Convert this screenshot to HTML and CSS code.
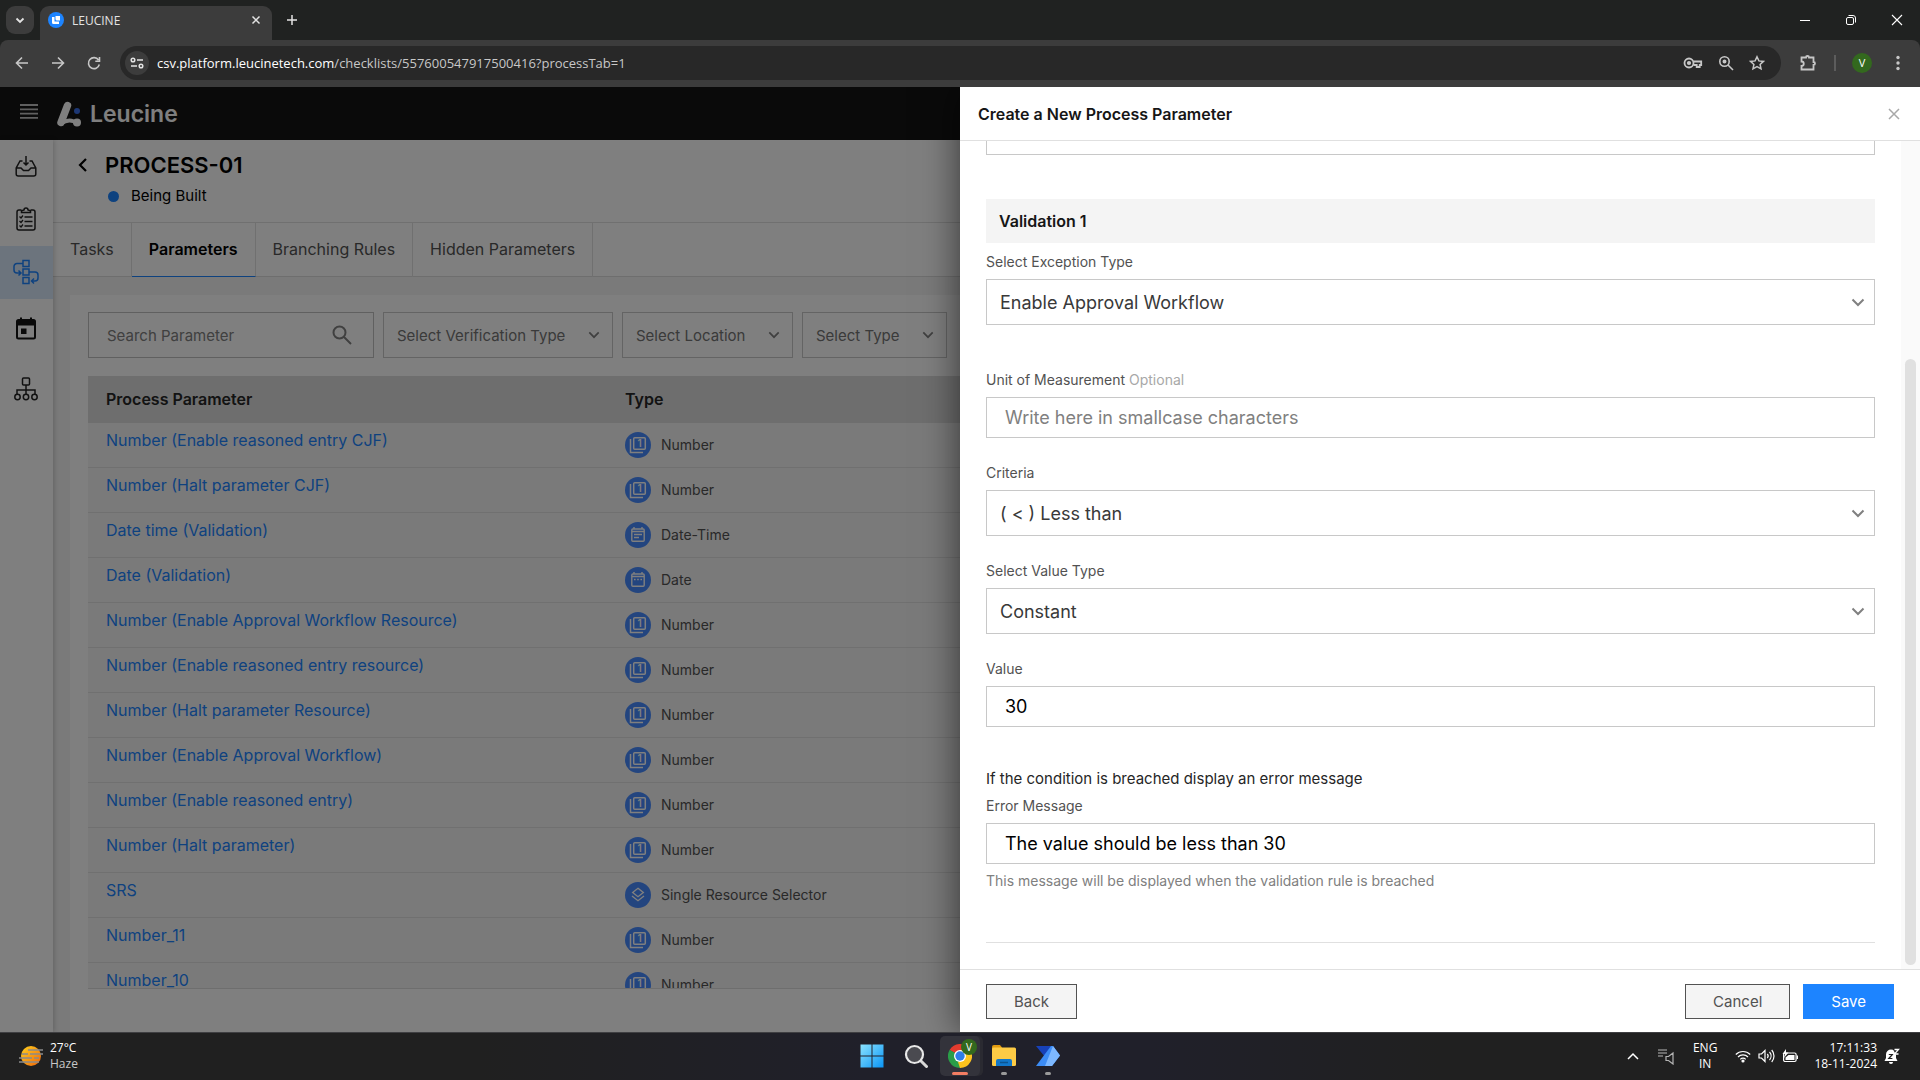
FILE: index.html
```html
<!DOCTYPE html>
<html lang="en">
<head>
    <meta charset="UTF-8">
    <title>LEUCINE</title>
    <link rel="stylesheet" href="styles.css">
</head>
<body>
    <!-- shared icons -->
    <svg class="sprite" aria-hidden="true">
        <symbol id="i-number" viewBox="0 0 26 26">
            <circle cx="13" cy="13" r="13" fill="#468aff"/>
            <path d="M5.500 7v13.500h12.500" fill="none" stroke="#fff" stroke-width="1.500"/>
            <rect x="8.700" y="5.700" width="11.600" height="11.600" rx="1" fill="none" stroke="#fff" stroke-width="1.500"/>
            <text x="14.500" y="15" text-anchor="middle" font-family="Inter, sans-serif" font-weight="600" font-size="10" fill="#fff">1</text>
        </symbol>
        <symbol id="i-datetime" viewBox="0 0 26 26">
            <circle cx="13" cy="13" r="13" fill="#468aff"/>
            <rect x="6.800" y="7" width="12.400" height="12.200" rx="1" fill="none" stroke="#fff" stroke-width="1.400"/>
            <path d="M9 5v2M17 5v2M7 9.500h12M9 12.500h8M9 15.500h5" stroke="#fff" stroke-width="1.400"/>
        </symbol>
        <symbol id="i-date" viewBox="0 0 26 26">
            <circle cx="13" cy="13" r="13" fill="#468aff"/>
            <rect x="6.800" y="7" width="12.400" height="12.200" rx="1" fill="none" stroke="#fff" stroke-width="1.400"/>
            <path d="M9 5v2M17 5v2M7 9.500h12" stroke="#fff" stroke-width="1.400"/>
            <path d="M9 12.500h1.600M12.200 12.500h1.600M15.400 12.500h1.600" stroke="#fff" stroke-width="1.600"/>
        </symbol>
        <symbol id="i-layers" viewBox="0 0 26 26">
            <circle cx="13" cy="13" r="13" fill="#468aff"/>
            <path d="M13 6.300l5.300 4.200-5.300 4.200-5.300-4.200zM7 14l6 4.700 6-4.700" fill="none" stroke="#fff" stroke-width="1.400"/>
        </symbol>
    </svg>

    <div class="screen">
        <!-- browser tabs -->
        <div class="tab-strip">
            <button class="tab-search" aria-label="Search tabs">
                <svg width="10" height="10" viewBox="0 0 10 10"><path d="M1.500 3.500L5 7l3.500-3.500" fill="none" stroke="#e3e3e3" stroke-width="1.800"/></svg>
            </button>
            <div class="tab">
                <svg width="16" height="16" viewBox="0 0 16 16"><circle cx="8" cy="8" r="8" fill="#1d84ff"/><path d="M4 5v5.500a1.500 1.500 0 0 0 1.500 1.500H11V9.500H6.500V5z" fill="#fff"/><path d="M7.500 4H12v4.500H9A1.500 1.500 0 0 1 7.500 7z" fill="#fff"/></svg>
                <span class="tab-title">LEUCINE</span>
                <button class="plain-btn" aria-label="Close tab">
                    <svg width="10" height="10" viewBox="0 0 10 10"><path d="M1.500 1.500l7 7M8.500 1.500l-7 7" stroke="#e3e3e3" stroke-width="1.500"/></svg>
                </button>
            </div>
            <button class="plain-btn new-tab" aria-label="New tab">
                <svg width="12" height="12" viewBox="0 0 12 12"><path d="M6 1v10M1 6h10" stroke="#e3e3e3" stroke-width="1.500"/></svg>
            </button>
            <div class="window-btns">
                <button class="plain-btn" aria-label="Minimize"><svg width="10" height="10" viewBox="0 0 10 10"><path d="M0 5.500h10" stroke="#fff"/></svg></button>
                <button class="plain-btn" aria-label="Restore"><svg width="10" height="10" viewBox="0 0 10 10" fill="none" stroke="#fff"><rect x=".5" y="2.500" width="7" height="7" rx="1.500"/><path d="M2.500.5H7A2.500 2.500 0 0 1 9.500 3v4.500"/></svg></button>
                <button class="plain-btn" aria-label="Close"><svg width="12" height="12" viewBox="0 0 12 12"><path d="M1 1l10 10M11 1L1 11" stroke="#fff" stroke-width="1.100"/></svg></button>
            </div>
        </div>

        <!-- address bar -->
        <div class="toolbar">
            <button class="plain-btn nav-btn" aria-label="Back"><svg width="16" height="16" viewBox="0 0 16 16" fill="none" stroke="#c7c7c7" stroke-width="1.600"><path d="M14 8H3M8 2.500L2.500 8 8 13.500"/></svg></button>
            <button class="plain-btn nav-btn" aria-label="Forward"><svg width="16" height="16" viewBox="0 0 16 16" fill="none" stroke="#c7c7c7" stroke-width="1.600"><path d="M2 8h11M8 2.500L13.500 8 8 13.500"/></svg></button>
            <button class="plain-btn nav-btn" aria-label="Reload"><svg width="16" height="16" viewBox="0 0 16 16" fill="none" stroke="#c7c7c7" stroke-width="1.600"><path d="M13.300 9.500A5.500 5.500 0 1 1 12.500 5M13.500 2v4.200H9.300"/></svg></button>
            <div class="omnibox">
                <span class="site-info">
                    <svg width="14" height="12" viewBox="0 0 14 12" fill="none" stroke="#e3e3e3" stroke-width="1.500"><circle cx="3" cy="3" r="1.800"/><path d="M7 3h6M1 9h6"/><circle cx="11" cy="9" r="1.800"/></svg>
                </span>
                <span class="url"><b>csv.platform.leucinetech.com</b>/checklists/557600547917500416?processTab=1</span>
                <svg width="20" height="16" viewBox="0 0 20 16" fill="none" stroke="#c7c7c7" stroke-width="1.800"><circle cx="6" cy="8" r="4.500"/><path d="M10.500 6.500h7.700v3.500h-1.500v2h-3v-2h-3.200"/><circle cx="6" cy="8" r="1.200" fill="#c7c7c7"/></svg>
                <svg width="16" height="16" viewBox="0 0 16 16" fill="none" stroke="#c7c7c7" stroke-width="1.600"><circle cx="6.500" cy="6.500" r="4.700"/><path d="M10 10l5 5"/><circle cx="6.500" cy="6.500" r="1.200" fill="#c7c7c7"/></svg>
                <svg width="16" height="16" viewBox="0 0 16 16" fill="none" stroke="#c7c7c7" stroke-width="1.500"><path d="M8 1.800l1.900 4.100 4.500.5-3.300 3 .9 4.400L8 11.600l-4 2.200.9-4.400-3.300-3 4.500-.5z"/></svg>
            </div>
            <svg class="puzzle" width="18" height="18" viewBox="0 0 18 18" fill="none" stroke="#c7c7c7" stroke-width="1.800"><path d="M2.500 3.500H7a1.500 1.500 0 0 1 3 0h4.500V8a1.500 1.500 0 0 1 0 3v4.500h-12V12a2 2 0 0 0 0-4.500z"/></svg>
            <span class="toolbar-sep"></span>
            <span class="avatar">V</span>
            <svg class="kebab" width="4" height="16" viewBox="0 0 4 16" fill="#c7c7c7"><circle cx="2" cy="2.500" r="1.700"/><circle cx="2" cy="8" r="1.700"/><circle cx="2" cy="13.500" r="1.700"/></svg>
        </div>

        <div class="app">
            <header class="app-header">
                <svg class="menu" width="18" height="15" viewBox="0 0 18 15"><path d="M0 1h18M0 5.300h18M0 9.600h18M0 13.900h18" stroke="#c0c0c0" stroke-width="1.800"/></svg>
                <svg class="logo" width="24" height="26" viewBox="0 0 24 26"><path d="M10.500 4.500L4 21.500" stroke="#fff" stroke-width="7.500" stroke-linecap="round"/><path d="M4 22.500q9-6 16 0" fill="none" stroke="#fff" stroke-width="4"/><circle cx="20" cy="21.500" r="4" fill="#fff"/><circle cx="20" cy="10" r="3" fill="#3a6fe8"/></svg>
                <span class="brand">Leucine</span>
            </header>

            <div class="app-body">
                <nav class="sidebar">
                    <a href="#" aria-label="Inbox"><svg width="22" height="22" viewBox="0 0 22 22" fill="none" stroke="#222" stroke-width="1.500"><path d="M7.500 6H5L1.200 13v6a2 2 0 0 0 2 2h15.600a2 2 0 0 0 2-2v-6L17 6h-2.500M1.200 13H6l2.500 2.500h5L16 13h4.800M11 1v9M8.500 7.500L11 10l2.500-2.500"/></svg></a>
                    <a href="#" aria-label="Checklists"><svg width="20" height="24" viewBox="0 0 20 24" fill="none" stroke="#222" stroke-width="1.500"><path d="M5.500 3H3a2 2 0 0 0-2 2v16a2 2 0 0 0 2 2h14a2 2 0 0 0 2-2V5a2 2 0 0 0-2-2h-2.500"/><path d="M5.500 5.500V3.800L8 3a2 2 0 0 1 4 0l2.500.8v1.700z"/><path d="M8.500 10h8M8.500 14.500h8M8.500 19h8M3.500 9.500L5 11l2-2.500M3.500 14L5 15.500 7 13M3.500 18.500L5 20l2-2.500" stroke-width="1.300"/></svg></a>
                    <a href="#" class="active" aria-label="Processes"><svg width="26" height="26" viewBox="0 0 26 26" fill="none" stroke="#1d84ff" stroke-width="1.500"><rect x="10" y="1.500" width="6" height="6"/><rect x="10" y="10" width="6" height="6"/><rect x="10" y="18.500" width="6" height="6"/><path d="M10 4.500H4a3 3 0 0 0-3 3V11a3 3 0 0 0 3 3h3.500M5.500 11.500L8 14l-2.500 2.500M16 13h6a3 3 0 0 1 3 3v3a3 3 0 0 1-3 3h-3.500M21 19.500L18.500 22l2.500 2.500"/></svg></a>
                    <a href="#" class="tall" aria-label="Schedule"><svg width="20" height="23" viewBox="0 0 20 23"><rect x="1" y="3" width="18" height="18.500" rx="1.500" fill="none" stroke="#141414" stroke-width="2"/><path d="M1 3h18v5.500H1zM4 .5h2V4H4zM14 .5h2V4h-2zM5 11.500h5.500V17H5z" fill="#141414"/></svg></a>
                    <a href="#" class="tall" aria-label="Ontology"><svg width="24" height="24" viewBox="0 0 24 24" fill="none" stroke="#222" stroke-width="1.500"><rect x="8.500" y="1" width="7" height="7" rx="1"/><path d="M12 8v9M3 17v-4h18v4"/><circle cx="3.500" cy="20" r="2.700"/><circle cx="12" cy="20" r="2.700"/><circle cx="20.500" cy="20" r="2.700"/></svg></a>
                </nav>

                <main class="main">
                    <div class="process-head">
                        <div class="process-name">
                            <a href="#" class="back-link" aria-label="Go back"><svg width="10" height="14" viewBox="0 0 10 14"><path d="M8 1L2 7l6 6" fill="none" stroke="#000" stroke-width="2.200"/></svg></a>
                            <h1>PROCESS-01</h1>
                        </div>
                        <div class="status">Being Built</div>
                    </div>
                    <div class="tabs">
                        <a href="#">Tasks</a>
                        <a href="#" class="active">Parameters</a>
                        <a href="#">Branching Rules</a>
                        <a href="#">Hidden Parameters</a>
                    </div>
                    <div class="content">
                        <div class="card">
                            <div class="filters">
                                <div class="search">
                                    <input type="text" placeholder="Search Parameter" aria-label="Search Parameter">
                                    <svg width="20" height="20" viewBox="0 0 20 20" fill="none" stroke="#808080" stroke-width="2"><circle cx="7.500" cy="7.500" r="6"/><path d="M12 12l7 7"/></svg>
                                </div>
                                <select aria-label="Verification type"><option>Select Verification Type</option></select>
                                <select aria-label="Location"><option>Select Location</option></select>
                                <select aria-label="Type"><option>Select Type</option></select>
                            </div>
                            <div class="table-box">
                                <table>
                                    <thead>
                                        <tr><th class="col-name">Process Parameter</th><th>Type</th></tr>
                                    </thead>
                                    <tbody>
                                        <tr><td><a href="#">Number (Enable reasoned entry CJF)</a></td><td><div class="type"><svg><use href="#i-number"/></svg>Number</div></td></tr>
                                        <tr><td><a href="#">Number (Halt parameter CJF)</a></td><td><div class="type"><svg><use href="#i-number"/></svg>Number</div></td></tr>
                                        <tr><td><a href="#">Date time (Validation)</a></td><td><div class="type"><svg><use href="#i-datetime"/></svg>Date-Time</div></td></tr>
                                        <tr><td><a href="#">Date (Validation)</a></td><td><div class="type"><svg><use href="#i-date"/></svg>Date</div></td></tr>
                                        <tr><td><a href="#">Number (Enable Approval Workflow Resource)</a></td><td><div class="type"><svg><use href="#i-number"/></svg>Number</div></td></tr>
                                        <tr><td><a href="#">Number (Enable reasoned entry resource)</a></td><td><div class="type"><svg><use href="#i-number"/></svg>Number</div></td></tr>
                                        <tr><td><a href="#">Number (Halt parameter Resource)</a></td><td><div class="type"><svg><use href="#i-number"/></svg>Number</div></td></tr>
                                        <tr><td><a href="#">Number (Enable Approval Workflow)</a></td><td><div class="type"><svg><use href="#i-number"/></svg>Number</div></td></tr>
                                        <tr><td><a href="#">Number (Enable reasoned entry)</a></td><td><div class="type"><svg><use href="#i-number"/></svg>Number</div></td></tr>
                                        <tr><td><a href="#">Number (Halt parameter)</a></td><td><div class="type"><svg><use href="#i-number"/></svg>Number</div></td></tr>
                                        <tr><td><a href="#">SRS</a></td><td><div class="type"><svg><use href="#i-layers"/></svg>Single Resource Selector</div></td></tr>
                                        <tr><td><a href="#">Number_11</a></td><td><div class="type"><svg><use href="#i-number"/></svg>Number</div></td></tr>
                                        <tr><td><a href="#">Number_10</a></td><td><div class="type"><svg><use href="#i-number"/></svg>Number</div></td></tr>
                                    </tbody>
                                </table>
                            </div>
                        </div>
                    </div>
                </main>
            </div>

            <div class="overlay"></div>

            <!-- parameter drawer -->
            <aside class="drawer">
                <div class="drawer-head">
                    <h2>Create a New Process Parameter</h2>
                    <button class="plain-btn" aria-label="Close drawer"><svg width="12" height="12" viewBox="0 0 12 12"><path d="M1 1l10 10M11 1L1 11" stroke="#a8a8a8" stroke-width="1.500"/></svg></button>
                </div>
                <div class="drawer-body">
                    <form class="form">
                        <div class="field-end"></div>
                        <h3>Validation 1</h3>
                        <div class="field first">
                            <label for="exception">Select Exception Type</label>
                            <select id="exception"><option>Enable Approval Workflow</option></select>
                        </div>
                        <div class="field">
                            <label for="unit">Unit of Measurement <span>Optional</span></label>
                            <input id="unit" type="text" placeholder="Write here in smallcase characters">
                        </div>
                        <div class="field">
                            <label for="criteria">Criteria</label>
                            <select id="criteria"><option>( &lt; ) Less than</option></select>
                        </div>
                        <div class="field">
                            <label for="value-type">Select Value Type</label>
                            <select id="value-type"><option>Constant</option></select>
                        </div>
                        <div class="field">
                            <label for="value">Value</label>
                            <input id="value" type="text" value="30">
                        </div>
                        <p class="condition">If the condition is breached display an error message</p>
                        <div class="field message">
                            <label for="error">Error Message</label>
                            <input id="error" type="text" value="The value should be less than 30">
                            <small>This message will be displayed when the validation rule is breached</small>
                        </div>
                    </form>
                    <div class="scroll-track"><div class="scroll-thumb"></div></div>
                </div>
                <div class="drawer-foot">
                    <button class="btn">Back</button>
                    <button class="btn push">Cancel</button>
                    <button class="btn primary">Save</button>
                </div>
            </aside>
        </div>

        <!-- taskbar -->
        <div class="taskbar">
            <div class="weather">
                <svg width="24" height="22" viewBox="0 0 24 22"><defs><linearGradient id="sun" x1="0" y1="0" x2="1" y2="1"><stop offset="0" stop-color="#ffd21e"/><stop offset="1" stop-color="#f0640a"/></linearGradient></defs><circle cx="12" cy="11" r="10" fill="url(#sun)"/><path d="M9 5h15M3 9h6M11 9h13M0 13h13M15 13h5M0 17h20" stroke="#8a8a8a" stroke-width="1.700"/></svg>
                <div>27°C<br><span>Haze</span></div>
            </div>
            <div class="apps">
                <button class="task" aria-label="Start"><svg width="24" height="24" viewBox="0 0 24 24"><defs><linearGradient id="win" x1="0" y1="0" x2="1" y2="1"><stop offset="0" stop-color="#8be3ff"/><stop offset="1" stop-color="#0a95f5"/></linearGradient></defs><path d="M.5.500h11v11H.5zM12.500.500h11v11h-11zM.5 12.500h11v11H.5zM12.500 12.500h11v11h-11z" fill="url(#win)"/></svg></button>
                <button class="task" aria-label="Search"><svg width="24" height="24" viewBox="0 0 24 24"><path d="M17 17l5.500 5.500" stroke="#d8d8d8" stroke-width="3" stroke-linecap="round"/><circle cx="10.500" cy="10.500" r="8.500" fill="#4a4a50" stroke="#e8e8e8" stroke-width="2.200"/></svg></button>
                <button class="task current" aria-label="Chrome">
                    <svg width="24" height="24" viewBox="0 0 24 24"><path d="M12 12L1.600 6A12 12 0 0 1 22.400 6z" fill="#e33b2e"/><path d="M12 12V24A12 12 0 0 1 1.600 6z" fill="#2a9d48"/><path d="M12 12L22.400 6A12 12 0 0 1 12 24z" fill="#fcc31e"/><path d="M12 6h10.400L17 15z" fill="#fcc31e"/><path d="M17 15l-5 9-2-6z" fill="#fcc31e"/><path d="M1.600 6L7 15l5-3z" fill="#2a9d48"/><circle cx="12" cy="12" r="6" fill="#fff"/><circle cx="12" cy="12" r="4.700" fill="#2f7de9"/></svg>
                    <span class="badge">V</span>
                    <i></i>
                </button>
                <button class="task open" aria-label="File Explorer"><svg width="24" height="24" viewBox="0 0 24 24"><path d="M0 3a2 2 0 0 1 2-2h6l2 2.500V8H0z" fill="#e09a10"/><rect y="3.500" width="24" height="18.500" rx="1.500" fill="#fdcb45"/><path d="M4 22v-5a2 2 0 0 1 2-2h12a2 2 0 0 1 2 2v5z" fill="#1277c9"/><path d="M8 18.500h8" stroke="#0b5490" stroke-width="1.500"/></svg><i></i></button>
                <button class="task open" aria-label="Power Automate"><svg width="24" height="24" viewBox="0 0 24 24"><path d="M0 2h15l4 5L9 13z" fill="#1741b8"/><path d="M15 2h2l7 9.500L16 22H0z" fill="#3c8cf5"/><path d="M17 2l7 9.500L16 22H9z" fill="#7db8ff"/></svg><i></i></button>
            </div>
            <div class="tray">
                <svg width="12" height="8" viewBox="0 0 12 8"><path d="M1 7l5-5 5 5" fill="none" stroke="#fff" stroke-width="1.500"/></svg>
                <svg class="mixer" width="18" height="18" viewBox="0 0 18 18" fill="none" stroke="#b5b5b5" stroke-width="1.200"><path d="M1 3h9M1 6h9M1 9h5M9 9.500h2.500L16 6v11l-4.500-3.500H9z"/></svg>
                <div class="lang">ENG<br>IN</div>
                <svg width="16" height="14" viewBox="0 0 16 14" fill="none" stroke="#fff" stroke-width="1.200"><path d="M.8 5.500a10.200 10.200 0 0 1 14.400 0M3 8a7 7 0 0 1 10 0M5.300 10.300a3.800 3.800 0 0 1 5.400 0"/><circle cx="8" cy="12" r="1" fill="#fff"/></svg>
                <svg width="17" height="14" viewBox="0 0 17 14" fill="none" stroke="#fff" stroke-width="1.200"><path d="M1 5h2.500L7 1.500v11L3.500 9H1zM9.300 5a3 3 0 0 1 0 4M11.500 3a6 6 0 0 1 0 8M13.700 1a9 9 0 0 1 0 12"/></svg>
                <svg width="17" height="14" viewBox="0 0 17 14"><rect x="1.600" y="4" width="12.500" height="8.500" rx="1.500" fill="none" stroke="#fff" stroke-width="1.200"/><path d="M6.500 6H12.500v5h-9V8.500zM14.800 6.500H16v3.500h-1.200z" fill="#fff"/><path d="M4 0L.5 5H3L2 9l4.500-5.500H4z" fill="#fff"/></svg>
                <div class="clock">17:11:33<br>18-11-2024</div>
                <!-- muted bell -->
                <svg width="16" height="16" viewBox="0 0 16 16"><path d="M7 1.500a5 5 0 0 0-5 5V10L.5 13h13L12 10V6.500a5 5 0 0 0-5-5z" fill="#fff"/><path d="M5 14h4a2 2 0 0 1-4 0z" fill="#fff"/><path d="M8.500 0H16v8h-3.500z" fill="#202020"/><path d="M4.800 6.500h3.600l-3.600 4h3.600" fill="none" stroke="#202020" stroke-width="1.200"/><path d="M10.500 1.500h4l-4 4.500h4" fill="none" stroke="#fff" stroke-width="1.300"/></svg>
            </div>
        </div>
    </div>
</body>
</html>
```
FILE: styles.css
```css
* {
    margin: 0;
    padding: 0;
    box-sizing: border-box;
}
body {
    font-family: Inter, "Liberation Sans", sans-serif;
    font-size: 15px;
    overflow: hidden;
}
a {
    text-decoration: none;
    color: inherit;
}
svg {
    display: block;
    flex-shrink: 0;
}
button,input,select {
    font-family: inherit;
}
.sprite {
    display: none;
}
.screen {
    display: flex;
    flex-direction: column;
    height: 100vh;
    background: #202221;
}
.plain-btn {
    display: flex;
    align-items: center;
    justify-content: center;
    border: 0;
    background: none;
    cursor: pointer;
}

/* browser */
.tab-strip {
    display: flex;
    align-items: center;
    height: 40px;
    padding-left: 6px;
    font-family: "Open Sans", "Noto Sans", sans-serif;
}
.tab-search {
    display: flex;
    align-items: center;
    justify-content: center;
    width: 28px;
    height: 28px;
    border: 0;
    border-radius: 9px;
    background: #3c3c3c;
}
.tab {
    display: flex;
    align-items: center;
    align-self: flex-end;
    gap: 8px;
    width: 232px;
    height: 34px;
    margin-left: 6px;
    padding: 0 11px 6px 8px;
    border-radius: 9px 9px 0 0;
    background: #3c3c3c;
}
.tab-title {
    flex: 1;
    font-size: 12px;
    color: #e3e3e3;
}
.new-tab {
    margin-left: 14px;
}
.window-btns {
    display: flex;
    margin-left: auto;
}
.window-btns .plain-btn {
    width: 46px;
    height: 40px;
}
.toolbar {
    display: flex;
    align-items: center;
    height: 47px;
    padding: 0 20px 1px 4px;
    border-radius: 8px 8px 0 0;
    background: #3c3c3c;
    font-family: "Open Sans", "Noto Sans", sans-serif;
}
.nav-btn {
    width: 36px;
    height: 34px;
}
.omnibox {
    display: flex;
    flex: 1;
    align-items: center;
    gap: 15px;
    height: 34px;
    margin-left: 8px;
    padding: 0 16px 0 5px;
    border-radius: 17px;
    background: #282828;
}
.site-info {
    display: flex;
    align-items: center;
    justify-content: center;
    width: 24px;
    height: 24px;
    border-radius: 50%;
    background: #3c3c3c;
}
.url {
    flex: 1;
    margin-left: -7px;
    font-size: 13px;
    color: #c7c7c7;
}
.url b {
    font-weight: 400;
    color: #fff;
}
.puzzle {
    margin-left: 18px;
}
.toolbar-sep {
    width: 2px;
    height: 16px;
    margin: 0 16px 0 17px;
    background: #5c5c5c;
}
.avatar {
    width: 20px;
    height: 20px;
    margin-right: 24px;
    border-radius: 50%;
    font-size: 11px;
    line-height: 20px;
    text-align: center;
    color: #fff;
    background: #33691e;
}

/* app */
.app {
    position: relative;
    display: flex;
    flex: 1;
    flex-direction: column;
    min-height: 0;
    overflow: hidden;
    background: #fff;
}
.app-header {
    display: flex;
    align-items: center;
    height: 53px;
    padding-left: 20px;
    background: #141414;
}
.menu {
    margin-bottom: 4px;
}
.logo {
    margin-left: 19px;
}
.brand {
    margin-left: 9px;
    font-size: 23px;
    font-weight: 600;
    color: #fff;
}
.app-body {
    display: flex;
    flex: 1;
    min-height: 0;
}
.sidebar {
    z-index: 1;
    width: 53px;
    box-shadow: 1px 0 5px rgba(0, 0, 0, .2);
}
.sidebar a {
    display: flex;
    align-items: center;
    justify-content: center;
    height: 53px;
    padding: 0 2px 1px 0;
}
.sidebar a.active {
    background: #d9e8fb;
}
.sidebar a.tall {
    height: 60px;
}
.main {
    display: flex;
    flex: 1;
    flex-direction: column;
    min-width: 0;
}
.process-head {
    height: 83px;
    padding: 11px 25px 0;
    border-bottom: 1px solid #e0e0e0;
}
.process-name {
    display: flex;
    align-items: center;
    gap: 17px;
}
h1 {
    font-size: 22px;
    line-height: 28px;
    font-weight: 600;
}
.status {
    display: flex;
    align-items: center;
    gap: 12px;
    padding: 6px 0 0 30px;
    line-height: 22px;
}
.status::before {
    content: "";
    width: 11px;
    height: 11px;
    border-radius: 50%;
    background: #1d84ff;
}
.tabs {
    display: flex;
    height: 54px;
    border-bottom: 1px solid #dcdcdc;
}
.tabs a {
    height: 54px;
    padding: 0 17px;
    border-right: 1px solid #e0e0e0;
    font-size: 16px;
    line-height: 53px;
    color: #525252;
}
.tabs a.active {
    border-bottom: 1px solid #1d84ff;
    font-weight: 600;
    color: #000;
}
.content {
    display: flex;
    flex: 1;
    min-height: 0;
    padding: 18px 17px 0;
    background: #f4f4f4;
}
.card {
    display: flex;
    flex: 1;
    flex-direction: column;
    min-width: 0;
    padding: 17px 18px 43px;
    background: #fff;
}
.filters {
    display: flex;
    gap: 9px;
    margin-bottom: 18px;
}
.search {
    display: flex;
    align-items: center;
    width: 286px;
    height: 46px;
    padding: 0 21px 0 18px;
    border: 1px solid #c0c0c0;
}
.search input {
    flex: 1;
    min-width: 0;
    border: 0;
    outline: 0;
    font-size: 15px;
    background: none;
}
input::placeholder {
    color: #808080;
}
select {
    appearance: none;
    border: 1px solid #c8c8c8;
    border-radius: 0;
    background: #fff url("data:image/svg+xml,%3Csvg xmlns='http://www.w3.org/2000/svg' width='14' height='9' viewBox='0 0 14 9'%3E%3Cpath d='M1.500 1.500L7 7l5.500-5.500' fill='none' stroke='%23808080' stroke-width='2'/%3E%3C/svg%3E") no-repeat right 9px center;
}
.filters select {
    height: 46px;
    padding: 0 46px 0 13px;
    font-size: 15px;
    color: #757575;
    background-size: 12px;
    background-position: right 12px center;
}
.table-box {
    flex: 1;
    min-height: 0;
    overflow: hidden;
    border-bottom: 1px solid #dcdcdc;
}
table {
    width: 100%;
    border-spacing: 0;
    table-layout: fixed;
    background: #f4f4f4;
}
th {
    height: 47px;
    padding: 0 18px 2px;
    text-align: left;
    font-size: 16px;
    font-weight: 600;
    color: #262626;
    background: #dcdcdc;
}
.col-name {
    width: 519px;
}
td {
    height: 45px;
    padding: 7px 18px 0;
    border-bottom: 1px solid #e0e0e0;
    line-height: 20px;
    vertical-align: top;
}
td a {
    font-size: 16px;
    color: #1d84ff;
}
.type {
    display: flex;
    align-items: center;
    gap: 10px;
    padding-top: 2px;
    font-size: 14px;
    color: #525252;
}
.type svg {
    width: 26px;
    height: 26px;
}

/* drawer */
.overlay {
    position: absolute;
    inset: 0;
    z-index: 2;
    background: rgba(0, 0, 0, .5);
}
.drawer {
    position: absolute;
    top: 0;
    right: 0;
    bottom: 0;
    z-index: 3;
    display: flex;
    flex-direction: column;
    width: 50%;
    background: #fff;
    box-shadow: 0 0 36px rgba(0, 0, 0, .6);
}
.drawer-head {
    display: flex;
    align-items: center;
    justify-content: space-between;
    height: 54px;
    padding: 0 20px 0 18px;
    border-bottom: 1px solid #e0e0e0;
}
h2,h3 {
    font-size: 16px;
    font-weight: 600;
    color: #161616;
}
.drawer-body {
    display: flex;
    flex: 1;
    min-height: 0;
}
.form {
    flex: 1;
    padding: 0 26px;
}
.field-end {
    height: 14px;
    border: 1px solid #c8c8c8;
    border-top: 0;
}
h3 {
    height: 44px;
    margin: 44px 0 9px;
    padding-left: 13px;
    line-height: 44px;
    background: #f4f4f4;
}
.field {
    display: flex;
    flex-direction: column;
    gap: 7px;
    margin-bottom: 25px;
}
.field.first {
    margin-bottom: 46px;
}
.field label {
    font-size: 14px;
    line-height: 20px;
    color: #525252;
}
.field label span {
    color: #a8a8a8;
}
.field select {
    height: 46px;
    padding-left: 13px;
    font-size: 18px;
    color: #393939;
}
.field input {
    height: 41px;
    padding: 0 18px;
    border: 1px solid #c8c8c8;
    outline: 0;
    font-size: 18px;
    color: #000;
}
.field input::placeholder {
    color: #808080;
}
.condition {
    margin: 42px 0 7px;
    line-height: 20px;
    color: #262626;
}
.field.message {
    padding-bottom: 51px;
    border-bottom: 1px solid #e0e0e0;
}
.field.first {
    margin-bottom: 45px;
}
.field small {
    font-size: 14px;
    line-height: 20px;
    color: #808080;
}
.scroll-track {
    width: 19px;
    padding: 218px 4px 4px;
    background: #fafafa;
}
.scroll-thumb {
    height: 100%;
    border-radius: 6px;
    background: #e0e0e0;
}
.drawer-foot {
    display: flex;
    align-items: center;
    gap: 13px;
    height: 63px;
    padding: 0 26px;
    border-top: 1px solid #e0e0e0;
}
.btn {
    height: 35px;
    padding: 0 27px;
    border: 1px solid #525252;
    font-size: 15px;
    color: #525252;
    background: #f4f4f4;
    cursor: pointer;
}
.btn.push {
    margin-left: auto;
}
.btn.primary {
    border-color: #1d84ff;
    color: #fff;
    background: #1d84ff;
}

/* taskbar */
.taskbar {
    display: grid;
    grid-template-columns: 1fr auto 1fr;
    align-items: center;
    height: 48px;
    padding-bottom: 1px;
    border-top: 1px solid #3f3f42;
    font-family: "Open Sans", "Noto Sans", sans-serif;
    font-size: 12px;
    line-height: 16px;
    color: #fff;
    background: linear-gradient(90deg, #202020 25%, #20202a 45%, #20202a 60%, #202020 75%);
}
.weather {
    display: flex;
    align-items: center;
    gap: 7px;
    padding-left: 19px;
}
.weather span {
    color: #c8c8c8;
}
.apps {
    display: flex;
    gap: 4px;
}
.task {
    position: relative;
    display: flex;
    align-items: center;
    justify-content: center;
    width: 40px;
    height: 40px;
    border: 0;
    border-radius: 5px;
    background: none;
}
.task.current {
    background: #33333b;
    box-shadow: 3px 0 0 #2a2a31;
}
.task i {
    position: absolute;
    bottom: 1px;
    left: 50%;
    width: 6px;
    height: 3px;
    margin-left: -3px;
    border-radius: 2px;
    background: #9a9a9a;
}
.task.current i {
    width: 16px;
    margin-left: -8px;
    background: #f27d63;
}
.badge {
    position: absolute;
    top: 3px;
    right: 3px;
    width: 16px;
    height: 16px;
    border-radius: 50%;
    font-size: 10px;
    line-height: 16px;
    color: #fff;
    background: #33691e;
}
.tray {
    display: flex;
    align-items: center;
    justify-content: flex-end;
    gap: 7px;
    padding-right: 20px;
}
.mixer {
    margin: 0 11px;
}
.lang {
    margin-right: 11px;
    text-align: center;
}
.clock {
    margin-left: 8px;
    text-align: right;
}
```
